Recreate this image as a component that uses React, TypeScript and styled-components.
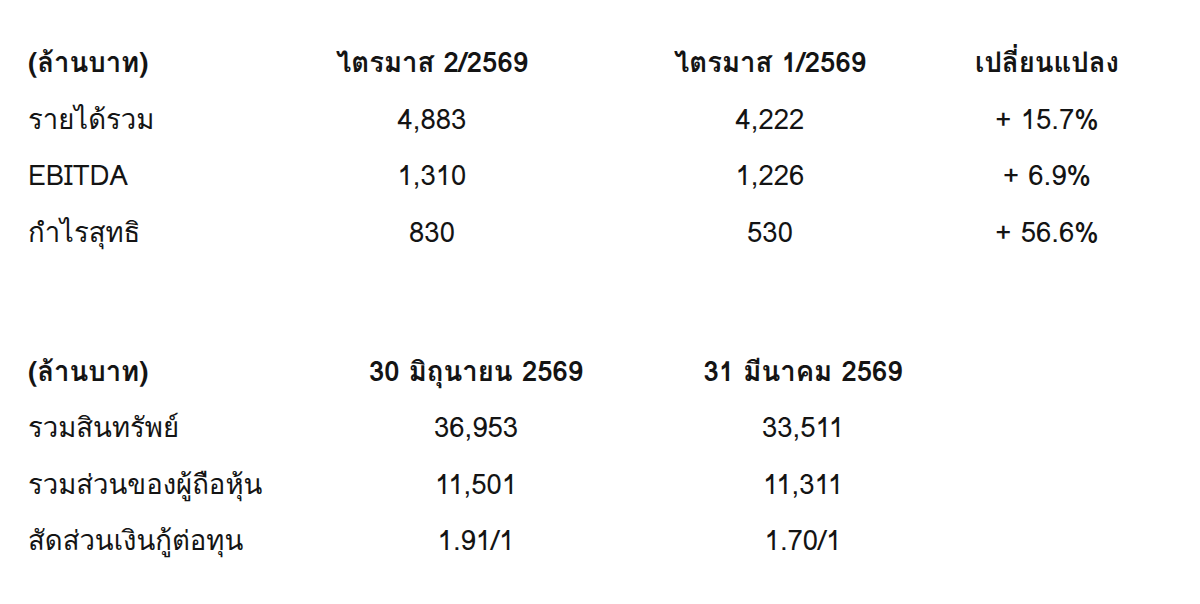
import styled, { createGlobalStyle } from "styled-components";

const GlobalStyle = createGlobalStyle`
    html, body {
        margin: 0;
        padding: 0;
        background: #ffffff;
    }
    body {
        font-family: "Loma", "Garuda", "Waree", "Noto Sans Thai", "Liberation Sans", sans-serif;
        color: #141414;
    }
`;

const Page = styled.div`
    width: 1200px;
    height: 604px;
    padding: 35px 0 0 28px;
    box-sizing: border-box;
    display: flex;
    flex-direction: column;
    gap: 83px;
`;

const Table = styled.div<{ $cols: string }>`
    display: grid;
    grid-template-columns: ${(p) => p.$cols};
    grid-auto-rows: 56.4px;
    align-items: center;
`;

const Cell = styled.div<{ $head?: boolean; $label?: boolean }>`
    font-size: 27.5px;
    font-weight: ${(p) => (p.$head ? 700 : 400)};
    text-align: ${(p) => (p.$label ? "left" : "center")};
    white-space: nowrap;
    line-height: 1;
`;

const quarterly = {
    cols: "260px 288px 388px 166px",
    head: ["(ล้านบาท)", "ไตรมาส 2/2569", "ไตรมาส 1/2569", "เปลี่ยนแปลง"],
    rows: [
        ["รายได้รวม", "4,883", "4,222", "+ 15.7%"],
        ["EBITDA", "1,310", "1,226", "+ 6.9%"],
        ["กำไรสุทธิ", "830", "530", "+ 56.6%"],
    ],
};

const balance = {
    cols: "262px 372px 282px",
    head: ["(ล้านบาท)", "30 มิถุนายน 2569", "31 มีนาคม 2569"],
    rows: [
        ["รวมสินทรัพย์", "36,953", "33,511"],
        ["รวมส่วนของผู้ถือหุ้น", "11,501", "11,311"],
        ["สัดส่วนเงินกู้ต่อทุน", "1.91/1", "1.70/1"],
    ],
};

function DataTable({ cols, head, rows }: { cols: string; head: string[]; rows: string[][] }) {
    return (
        <Table $cols={cols}>
            {head.map((h, i) => (
                <Cell key={`h${i}`} $head $label={i === 0}>
                    {h}
                </Cell>
            ))}
            {rows.map((row, r) =>
                row.map((v, i) => (
                    <Cell key={`${r}-${i}`} $label={i === 0}>
                        {v}
                    </Cell>
                ))
            )}
        </Table>
    );
}

function App() {
    return (
        <>
            <GlobalStyle />
            <Page>
                <DataTable {...quarterly} />
                <DataTable {...balance} />
            </Page>
        </>
    );
}

export default App;
